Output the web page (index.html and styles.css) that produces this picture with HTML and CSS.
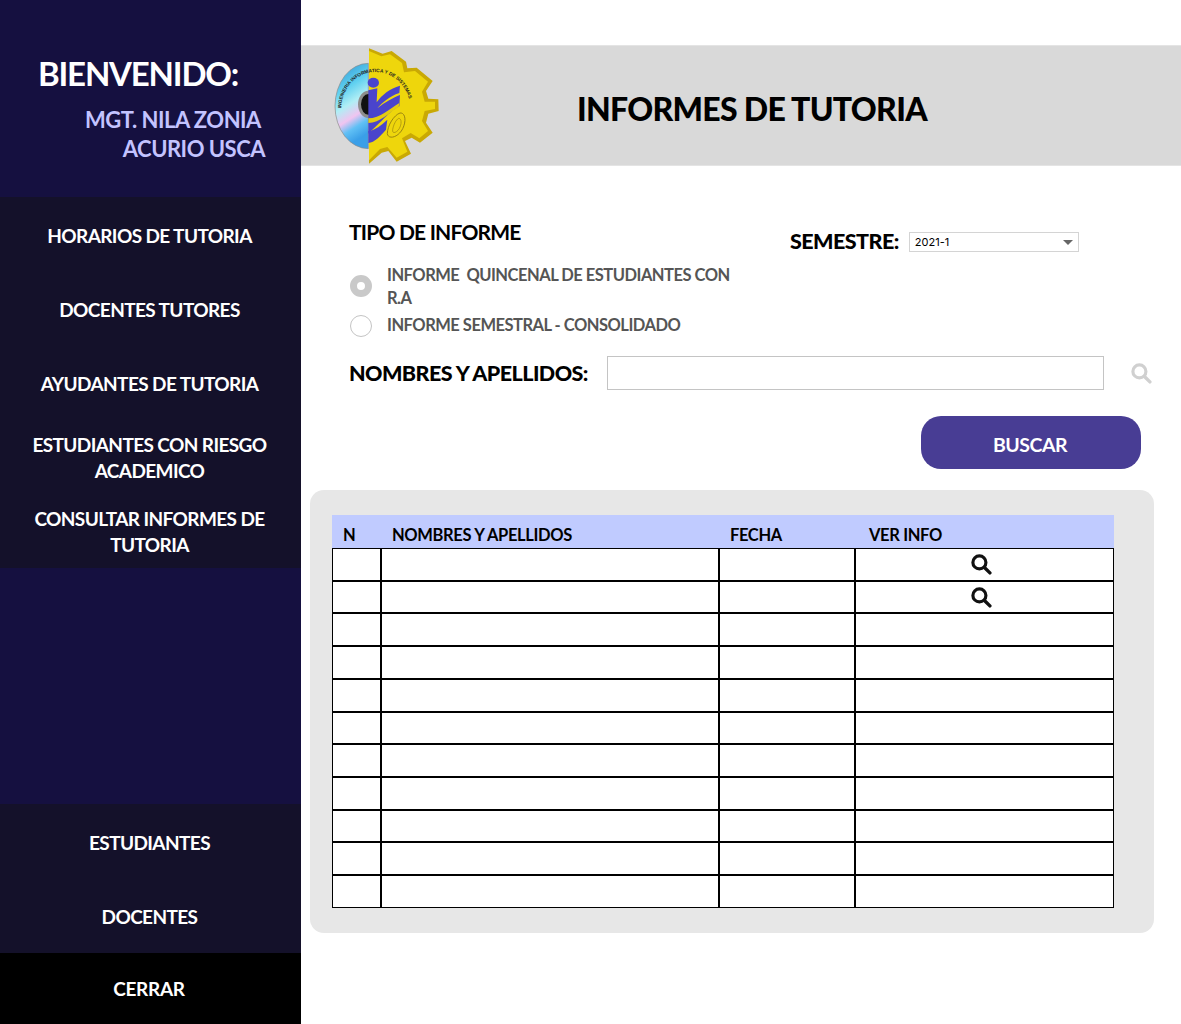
FILE: index.html
```html
<!DOCTYPE html>
<html lang="en">
<head>
    <meta charset="UTF-8">
    <meta name="viewport" content="width=device-width, initial-scale=1.0">
    <title>Informes de Tutoria</title>
    <link rel="stylesheet" href="styles.css">
</head>
<body>
    <aside class="sidebar">
        <div class="welcome">
            <h2>BIENVENIDO:</h2>
            <p>MGT. NILA ZONIA&nbsp;<br>ACURIO USCA</p>
        </div>
        <nav class="menu menu-top">
            <a href="#">HORARIOS DE TUTORIA</a>
            <a href="#">DOCENTES TUTORES</a>
            <a href="#">AYUDANTES DE TUTORIA</a>
            <a href="#">ESTUDIANTES CON RIESGO ACADEMICO</a>
            <a href="#">CONSULTAR INFORMES DE TUTORIA</a>
        </nav>
        <nav class="menu menu-bottom">
            <a href="#">ESTUDIANTES</a>
            <a href="#">DOCENTES</a>
        </nav>
        <a class="logout" href="#">CERRAR</a>
    </aside>

    <main class="content">
        <header class="banner">
            <svg class="logo" viewBox="102 48 318 354" aria-hidden="true">
                <defs>
                    <linearGradient id="cd" x1="0" y1="0" x2="0.25" y2="1">
                        <stop offset="0" stop-color="#2a8fd0"/>
                        <stop offset="0.35" stop-color="#5fd0f0"/>
                        <stop offset="0.55" stop-color="#b0eef5"/>
                        <stop offset="0.72" stop-color="#f0c4f0"/>
                        <stop offset="0.85" stop-color="#60c0f5"/>
                        <stop offset="1" stop-color="#3a9fe8"/>
                    </linearGradient>
                </defs>
                <path d="M205 97 A100 128 0 0 0 205 353 Z" fill="url(#cd)" stroke="#8a8a8a" stroke-width="2"/>
                <ellipse cx="205" cy="220" rx="31" ry="41" fill="#8d8d8d"/>
                <ellipse cx="205" cy="220" rx="22" ry="31" fill="#111"/>
                <path d="M207 52 L248 68 L275 60 L318 92 L322 112 L350 110 L398 150 L378 180 L385 203 L415 205 L416 240 L385 248 L378 275 L398 305 L360 335 L335 320 L315 330 L333 368 L290 392 L265 360 L245 365 L207 398 Z" fill="#c9a904"/>
                <path d="M207 60 L244 76 L270 70 L306 96 L312 124 L345 120 L384 152 L366 182 L374 212 L405 212 L405 234 L374 240 L366 270 L384 300 L358 322 L332 306 L306 322 L322 362 L290 380 L262 348 L240 354 L207 388 Z" fill="#eed60c"/>
                <path d="M205 178 L232 172 L230 214 C245 192 270 172 300 164 L298 186 C268 196 248 214 232 232 C256 212 280 200 300 192 L298 226 C270 240 255 262 205 308 Z" fill="#4a44cc"/>
                <path d="M205 262 C240 262 270 232 298 216 L296 228 C268 244 240 276 205 276 Z" fill="#e4cc10"/>
                <path d="M205 300 C226 298 244 282 262 266 L258 296 C240 316 224 334 205 336 Z" fill="#4a44cc"/>
                <ellipse cx="220" cy="155" rx="17" ry="15" fill="#4a44cc"/>
                <path d="M300 246 C318 244 320 276 304 300 C288 322 264 324 262 308 C262 284 282 252 300 246 Z" fill="none" stroke="#9a8410" stroke-width="3"/>
                <path d="M296 262 C306 262 306 284 294 298 C284 308 276 306 278 296 C280 282 288 266 296 262 Z" fill="none" stroke="#9a8410" stroke-width="2"/>
                <path id="logo-arc" d="M124 232 A102 108 0 0 1 330 232" fill="none"/>
                <text class="logo-text"><textPath href="#logo-arc">INGENIERIA INFORMATICA Y DE SISTEMAS</textPath></text>
            </svg>
            <h1>INFORMES DE TUTORIA</h1>
        </header>

        <section class="filters">
            <div class="filter-top">
                <div class="report-type">
                    <h3>TIPO DE INFORME</h3>
                    <label class="option">
                        <span class="radio checked"></span>
                        <span class="option-text">INFORME &nbsp;QUINCENAL DE ESTUDIANTES CON R.A</span>
                    </label>
                    <label class="option">
                        <span class="radio"></span>
                        <span class="option-text">INFORME SEMESTRAL - CONSOLIDADO</span>
                    </label>
                </div>
                <div class="semester">
                    <span class="field-label">SEMESTRE:</span>
                    <div class="select">2021-1</div>
                </div>
            </div>
            <div class="name-row">
                <span class="field-label">NOMBRES Y APELLIDOS:</span>
                <input type="text" class="name-input">
                <svg class="search-icon search-light" viewBox="0 0 20 20" aria-hidden="true">
                    <circle cx="8" cy="8" r="6.2" fill="none" stroke="currentColor" stroke-width="3"/>
                    <path d="M12.8 12.8 L18 18" stroke="currentColor" stroke-width="3.2" stroke-linecap="round"/>
                </svg>
            </div>
            <div class="actions">
                <button class="btn-search">BUSCAR</button>
            </div>
        </section>

        <section class="panel">
            <table class="results">
                <colgroup>
                    <col class="col-n"><col class="col-name"><col class="col-date"><col class="col-info">
                </colgroup>
                <thead>
                    <tr>
                        <th>N</th>
                        <th>NOMBRES Y APELLIDOS</th>
                        <th>FECHA</th>
                        <th>VER INFO</th>
                    </tr>
                </thead>
                <tbody>
                    <tr><td></td><td></td><td></td><td class="view"><svg class="search-icon" viewBox="0 0 20 20" aria-hidden="true"><circle cx="8" cy="8" r="6.2" fill="none" stroke="currentColor" stroke-width="3"/><path d="M12.8 12.8 L18 18" stroke="currentColor" stroke-width="3.2" stroke-linecap="round"/></svg></td></tr>
                    <tr><td></td><td></td><td></td><td class="view"><svg class="search-icon" viewBox="0 0 20 20" aria-hidden="true"><circle cx="8" cy="8" r="6.2" fill="none" stroke="currentColor" stroke-width="3"/><path d="M12.8 12.8 L18 18" stroke="currentColor" stroke-width="3.2" stroke-linecap="round"/></svg></td></tr>
                    <tr><td></td><td></td><td></td><td></td></tr>
                    <tr><td></td><td></td><td></td><td></td></tr>
                    <tr><td></td><td></td><td></td><td></td></tr>
                    <tr><td></td><td></td><td></td><td></td></tr>
                    <tr><td></td><td></td><td></td><td></td></tr>
                    <tr><td></td><td></td><td></td><td></td></tr>
                    <tr><td></td><td></td><td></td><td></td></tr>
                    <tr><td></td><td></td><td></td><td></td></tr>
                    <tr><td></td><td></td><td></td><td></td></tr>
                </tbody>
            </table>
        </section>
    </main>
</body>
</html>
```

FILE: styles.css
```css
* {
    box-sizing: border-box;
}

body {
    font-family: 'Lato', 'Liberation Sans', sans-serif;
    font-weight: 700;
    margin: 0;
    height: 1024px;
    display: flex;
    background: #fff;
    color: #000;
    overflow: hidden;
}

.sidebar {
    width: 301px;
    height: 1024px;
    flex-shrink: 0;
    background: #151040;
    color: #fff;
    display: flex;
    flex-direction: column;
}

.welcome {
    height: 197px;
    padding: 52px 36px 0 38px;
}

.welcome h2 {
    margin: 0;
    font-size: 33px;
    line-height: 42px;
    letter-spacing: -1.2px;
    white-space: nowrap;
}

.welcome p {
    margin: 11px 0 0;
    font-size: 22px;
    line-height: 29px;
    font-weight: 700;
    letter-spacing: -0.5px;
    color: #c3c3ff;
    text-align: right;
}

.menu {
    display: flex;
    flex-direction: column;
    background: #14112a;
}

.menu a {
    display: flex;
    align-items: center;
    justify-content: center;
    text-align: center;
    color: #fff;
    text-decoration: none;
    font-size: 19px;
    line-height: 26px;
    letter-spacing: -0.6px;
    padding: 3px 31px 0 29px;
}

.menu-top {
    height: 371px;
}

.menu-top a {
    height: 74px;
}

.menu-bottom {
    margin-top: auto;
    height: 149px;
}

.menu-bottom a {
    height: 74.5px;
}

.logout {
    height: 71px;
    background: #000;
    color: #fff;
    text-decoration: none;
    font-size: 19px;
    letter-spacing: -0.3px;
    padding-right: 3px;
    display: flex;
    align-items: center;
    justify-content: center;
}

.content {
    flex: 1;
    min-width: 0;
    padding-top: 45px;
}

.banner {
    height: 121px;
    background: #d9d9d9;
    border-top: 1px solid #e4e4e4;
    border-bottom: 1px solid #e4e4e4;
    display: flex;
    align-items: center;
    padding-left: 33px;
}

.logo {
    width: 106px;
    height: 118px;
    flex-shrink: 0;
}

.logo-text {
    font-family: 'Liberation Sans', sans-serif;
    font-size: 14.5px;
    font-weight: 700;
    fill: #222;
}

.banner h1 {
    margin: 6px 0 0 137px;
    font-size: 32px;
    font-weight: 900;
    letter-spacing: -0.7px;
    white-space: nowrap;
}

.filters {
    padding: 52px 30px 0 48px;
}

.filter-top {
    display: flex;
}

.report-type {
    width: 393px;
    flex-shrink: 0;
}

.report-type h3 {
    margin: 0 0 18px;
    font-size: 21px;
    line-height: 28px;
    letter-spacing: -0.8px;
}

.option {
    display: flex;
    align-items: center;
    gap: 15px;
    color: #555;
    font-size: 16.5px;
    line-height: 23px;
    letter-spacing: -0.5px;
    margin-bottom: 3px;
}

.option:last-child {
    margin-bottom: 2px;
}

.option:last-child .radio {
    margin-top: 2px;
}

.option-text {
    width: 350px;
}

.radio {
    width: 22px;
    height: 22px;
    flex-shrink: 0;
    margin-left: 1px;
    border-radius: 50%;
    border: 1px solid #c4c4c4;
    background: #fff;
}

.radio.checked {
    border: 7px solid #c9c9c9;
    background: #fff;
    margin-top: -3px;
}

.semester {
    display: flex;
    align-items: center;
    gap: 10px;
    margin: 10px 0 0 48px;
    height: 26px;
}

.field-label {
    font-size: 21.5px;
    font-weight: 900;
    letter-spacing: -0.55px;
    white-space: nowrap;
}

.select {
    width: 170px;
    height: 20px;
    margin-top: 1px;
    border: 1px solid #d4d4d4;
    font-family: 'Inter', sans-serif;
    font-weight: 400;
    font-size: 11px;
    line-height: 18px;
    padding-left: 5px;
    position: relative;
}

.select::after {
    content: "";
    position: absolute;
    right: 5px;
    top: 7px;
    border-left: 5px solid transparent;
    border-right: 5px solid transparent;
    border-top: 5px solid #666;
}

.name-row {
    display: flex;
    align-items: center;
    margin-top: 17px;
    height: 34px;
}

.name-row .field-label {
    width: 258px;
    flex-shrink: 0;
}

.name-input {
    width: 497px;
    height: 34px;
    flex-shrink: 0;
    border: 1px solid #c4c4c4;
    background: #fff;
    outline: none;
}

.search-icon {
    width: 21px;
    height: 21px;
    flex-shrink: 0;
    color: #111;
    display: block;
}

.search-light {
    color: #d0d0d0;
    margin-left: 27px;
}

.actions {
    display: flex;
    justify-content: flex-end;
    margin-top: 26px;
    padding-right: 10px;
}

.btn-search {
    width: 220px;
    height: 53px;
    border: none;
    border-radius: 20px;
    padding: 4px 2px 0 0;
    background: #483d94;
    color: #fff;
    font-family: inherit;
    font-weight: 700;
    font-size: 19.5px;
    letter-spacing: -0.5px;
}

.panel {
    margin: 21px 27px 0 9px;
    height: 443px;
    padding: 25px 0 0 22px;
    background: #e7e7e7;
    border-radius: 14px;
}

.results {
    width: 782px;
    table-layout: fixed;
    border-collapse: separate;
    border-spacing: 0;
    background: #fff;
}

.col-n { width: 49px; }
.col-name { width: 338px; }
.col-date { width: 136px; }
.col-info { width: 259px; }

.results th {
    height: 33px;
    background: #c0cbff;
    text-align: left;
    font-size: 16.5px;
    letter-spacing: -0.35px;
    padding: 6px 0 0 11px;
}

.results th:last-child {
    padding-left: 14px;
}

.results td {
    height: 32.73px;
    padding: 0;
    border: 1px solid #000;
}

.results td.view .search-icon {
    margin: 0 auto;
    position: relative;
    left: -3px;
}
```
